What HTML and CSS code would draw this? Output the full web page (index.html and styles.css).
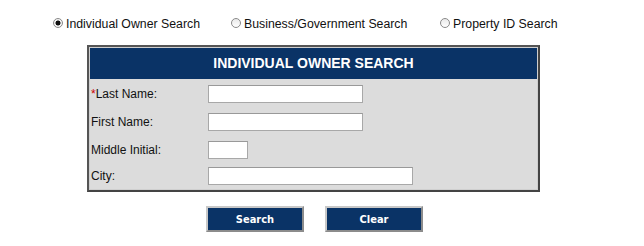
FILE: index.html
```html
<!DOCTYPE html>
<html>
<head>
<meta charset="utf-8">
<link rel="stylesheet" href="styles.css">
</head>
<body>
<div class="modes">
  <label class="mode mode-1"><input type="radio" name="mode" checked><span>Individual Owner Search</span></label>
  <label class="mode mode-2"><input type="radio" name="mode"><span>Business/Government Search</span></label>
  <label class="mode"><input type="radio" name="mode"><span>Property ID Search</span></label>
</div>
<div class="panel">
  <div class="panel-inner">
    <div class="panel-head">INDIVIDUAL OWNER SEARCH</div>
    <div class="panel-body">
      <div class="row"><span class="lbl"><span class="req">*</span>Last Name:</span><input class="txt w-name" type="text"></div>
      <div class="row"><span class="lbl">First Name:</span><input class="txt w-name" type="text"></div>
      <div class="row"><span class="lbl">Middle Initial:</span><input class="txt w-mi" type="text"></div>
      <div class="row row-last"><span class="lbl">City:</span><input class="txt w-city" type="text"></div>
    </div>
  </div>
</div>
<div class="actions">
  <button class="btn" type="button">Search</button>
  <button class="btn" type="button">Clear</button>
</div>
</body>
</html>
```
FILE: styles.css
```css
html, body {
  margin: 0;
  padding: 0;
  background: #fff;
  font-family: "Liberation Sans", Arial, sans-serif;
  color: #111;
}
.modes {
  display: flex;
  align-items: center;
  padding-left: 53px;
  margin-top: 15px;
  height: 16px;
  font-size: 12.3px;
  line-height: 16px;
}
.mode {
  display: flex;
  align-items: center;
}
.mode-1 { width: 178px; }
.mode-2 { width: 209px; }
.mode span { position: relative; top: 1px; }
.mode input {
  -webkit-appearance: none;
  appearance: none;
  margin: 0 3px 0 0;
  width: 10px;
  height: 10px;
  border-radius: 50%;
  border: 1px solid #8a8a8a;
  background: linear-gradient(#e9e9e9, #ffffff);
  box-sizing: border-box;
}
.mode input:checked {
  background: radial-gradient(circle, #111 0 2.2px, #f2f2f2 2.8px);
}
.panel {
  margin: 14px 0 0 87px;
  width: 453px;
  box-sizing: border-box;
  border: 2px solid #555;
  border-right-color: #444;
  border-bottom-color: #444;
}
.panel-inner {
  border: 1px solid #cfcfcf;
  background: #dcdcdc;
}
.panel-head {
  background: #0a3366;
  color: #fff;
  font-weight: bold;
  font-size: 14px;
  text-align: center;
  height: 31px;
  line-height: 31px;
}
.panel-body {
  padding: 6px 0 4px 1px;
  display: flex;
  flex-direction: column;
  gap: 10px;
}
.row {
  display: flex;
  align-items: center;
  height: 18px;
}
.row-last { margin-top: -2px; }
.lbl {
  width: 117px;
  font-size: 12px;
  color: #111;
}
.req { color: #c00; }
.txt {
  box-sizing: border-box;
  height: 18px;
  margin: 0;
  padding: 0 2px;
  border: 1px solid #a8a8a8;
  border-top-color: #999;
  background: #fff;
}
.w-name { width: 155px; }
.w-mi { width: 40px; }
.w-city { width: 205px; }
.actions {
  display: flex;
  gap: 21px;
  margin: 14px 0 0 206px;
}
.btn {
  box-sizing: border-box;
  width: 98px;
  height: 26px;
  margin: 0;
  padding: 0;
  background: #0a3366;
  color: #fff;
  font-family: "DejaVu Sans Condensed", "DejaVu Sans", sans-serif;
  font-weight: bold;
  font-size: 11px;
  border: 2px solid;
  border-color: #c8c8c8 #8c8c8c #8c8c8c #c8c8c8;
}
```
